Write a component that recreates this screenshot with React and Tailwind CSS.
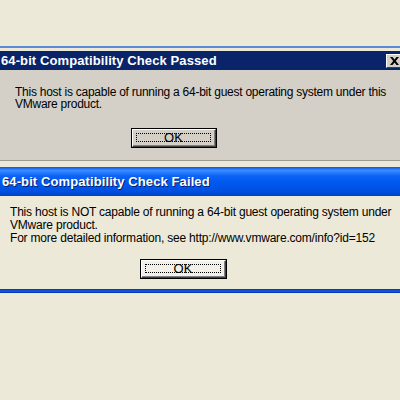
import React from "react";

function OkButton({ face }) {
  return (
    <div className={"w-full h-full border border-black " + face}>
      <div className="w-full h-full border-t border-l border-white border-r border-b border-r-[#404040] border-b-[#404040] flex">
        <div className="flex-1 border-r border-b border-[#808080] flex p-[3px]">
          <div className="flex-1 border border-dotted border-black flex items-center justify-center text-[13px] leading-none text-black">
            OK
          </div>
        </div>
      </div>
    </div>
  );
}

export default function App() {
  return (
    <div className="w-[400px] h-[400px] bg-[#ECE9D8] flex flex-col overflow-hidden font-['Liberation_Sans',Arial,sans-serif]">
      <div className="h-[46px] shrink-0" />
      <div className="h-[2px] shrink-0 bg-[#5B8BD6]" />
      <div className="h-[3px] shrink-0" />

      {/* passed dialog */}
      <div className="h-[19px] shrink-0 bg-[#0A246A] flex items-center justify-between">
        <span className="pl-[1px] text-white font-bold text-[13px] leading-none whitespace-nowrap tracking-[0.1px]">
          64-bit Compatibility Check Passed
        </span>
        <div className="w-[16px] h-[14px] mr-[-2px] bg-[#D4D0C8] border-t border-l border-white border-b border-r border-b-[#404040] border-r-[#404040] flex items-center justify-center">
          <svg width="9" height="8" viewBox="0 0 9 8">
            <path d="M0 0h2.5l2 2.6L6.5 0H9L5.8 4L9 8H6.5l-2-2.6L2.5 8H0l3.2-4z" fill="#000" />
          </svg>
        </div>
      </div>
      <div className="h-[90px] shrink-0 bg-[#D4D0C8] flex flex-col pt-[16px] pl-[15px]">
        <p className="text-[12px] leading-[12px] tracking-[-0.25px] text-black whitespace-nowrap">
          This host is capable of running a 64-bit guest operating system under this
          <br />
          VMware product.
        </p>
        <div className="mt-[18px] ml-[116px] w-[86px] h-[20px]">
          <OkButton face="bg-[#D4D0C8]" />
        </div>
      </div>
      <div className="h-[1px] shrink-0 bg-[#9C9A94]" />
      <div className="h-[6px] shrink-0" />

      {/* failed dialog */}
      <div className="h-[29px] shrink-0 flex items-center bg-[linear-gradient(180deg,#0A5AE0_0%,#3C8CFF_12%,#0B64F5_30%,#0058EE_55%,#0050E0_85%,#0040C0_100%)]">
        <span className="pl-[2px] text-white font-bold text-[13px] leading-none whitespace-nowrap tracking-[0.1px] [text-shadow:1px_1px_0_#0A1E6E]">
          64-bit Compatibility Check Failed
        </span>
      </div>
      <div className="flex flex-col pt-[10px] pl-[10px]">
        <p className="text-[12px] leading-[13px] tracking-[-0.2px] text-black whitespace-nowrap">
          This host is NOT capable of running a 64-bit guest operating system under
          <br />
          VMware product.
          <br />
          For more detailed information, see http://www.vmware.com/info?id=152
        </p>
        <div className="mt-[14px] ml-[130px] w-[87px] h-[20px]">
          <OkButton face="bg-[#F2F0E8]" />
        </div>
      </div>
      <div className="h-[10px] shrink-0" />
      <div className="h-[4px] shrink-0 bg-[linear-gradient(180deg,#0030B0_0%,#1A5CE0_50%,#0030B0_100%)]" />
    </div>
  );
}
